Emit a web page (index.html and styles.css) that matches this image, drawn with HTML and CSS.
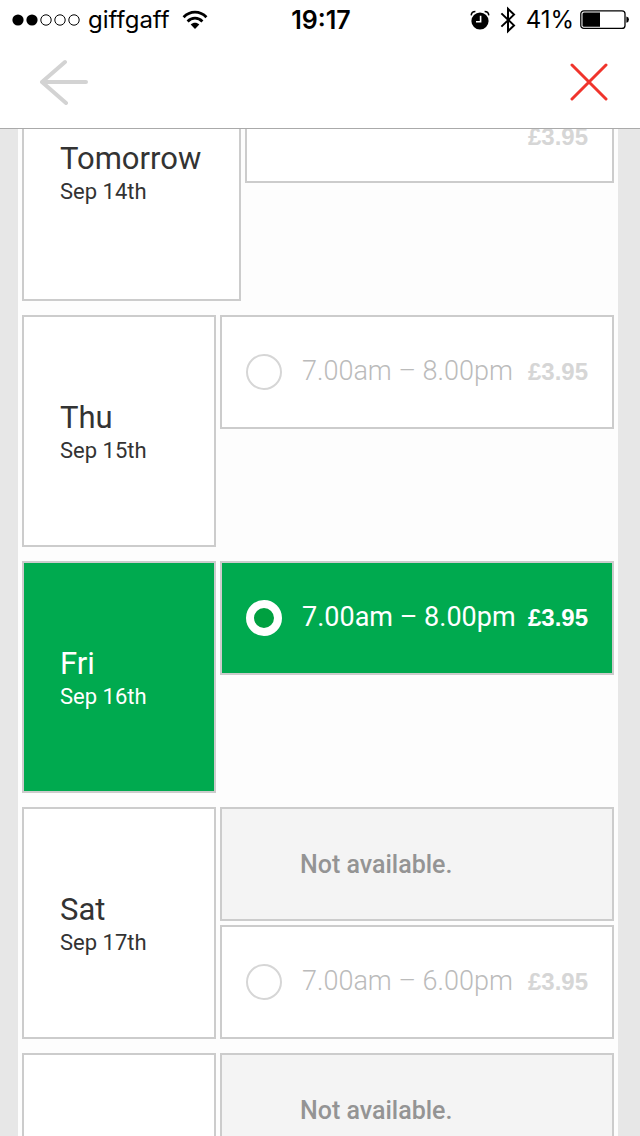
FILE: index.html
```html
<!DOCTYPE html>
<html lang="en">
<head>
<meta charset="utf-8">
<meta name="viewport" content="width=device-width, initial-scale=1">
<title>Delivery slot</title>
<link rel="stylesheet" href="styles.css">
</head>
<body>
<div class="status">
	<div class="status-left">
		<svg class="signal" width="68" height="12" viewBox="0 0 68 12">
			<circle cx="6" cy="6" r="5.6"/><circle cx="20" cy="6" r="5.6"/>
			<g fill="none" stroke="#000"><circle cx="34" cy="6" r="5.2"/><circle cx="48" cy="6" r="5.2"/><circle cx="62" cy="6" r="5.2"/></g>
		</svg>
		<span class="carrier">giffgaff</span>
		<svg width="26" height="20" viewBox="0 0 26 20">
			<g fill="none" stroke="#000" stroke-width="2.8"><path d="M1.6 7.2C8 .4 18 .4 24.4 7.2"/><path d="M5.6 11.4C9.8 7.1 16.2 7.1 20.4 11.4"/></g>
			<path d="M8.7 14.5C11.2 12.2 14.8 12.2 17.3 14.5L13 19Z"/>
		</svg>
	</div>
	<div class="clock">19:17</div>
	<div class="status-right">
		<svg width="20" height="20" viewBox="0 0 20 20">
			<circle cx="10" cy="11" r="8.6"/>
			<path d="M1.2 5.4C1.4 3.2 3.2 1.6 5.4 1.6M14.6 1.6C16.8 1.6 18.6 3.2 18.8 5.4" fill="none" stroke="#000" stroke-width="1.5"/>
			<path d="M10.6 5.8V11.7H6" fill="none" stroke="#fff" stroke-width="1.6"/>
		</svg>
		<svg width="16" height="28" viewBox="0 0 16 28">
			<path d="M1.4 7.4L14 19.4L8 25.2V2.8L14 8.6L1.4 20.6" fill="none" stroke="#000" stroke-width="2"/>
		</svg>
		<span>41%</span>
		<svg class="battery" width="50" height="20" viewBox="0 0 50 20">
			<rect x=".8" y=".8" width="44.2" height="17.6" rx="3" fill="none" stroke="#000" stroke-width="1.3"/>
			<path d="M2.5 4Q2.5 2.5 4 2.5H20V16.7H4Q2.5 16.7 2.5 15.2Z"/>
			<path d="M46.4 6.4Q49 7 49 9.6Q49 12.2 46.4 12.8Z"/>
		</svg>
	</div>
</div>
<header class="nav">
	<button class="nav-button" type="button" aria-label="Back">
		<svg width="48" height="46" viewBox="0 0 48 46" fill="none" stroke="#d3d3d3" stroke-width="4" stroke-linecap="round" stroke-linejoin="round"><path d="M25 3L2 23L26 44M2 23H46"/></svg>
	</button>
	<button class="nav-button" type="button" aria-label="Close">
		<svg width="38" height="38" viewBox="0 0 38 38" fill="none" stroke="#f0342c" stroke-width="3" stroke-linecap="round"><path d="M2 2L36 36M36 2L2 36"/></svg>
	</button>
</header>
<main class="scroller">
	<form class="days">
		<section class="day tall">
			<div class="date"><h2>Tomorrow</h2><p>Sep 14th</p></div>
			<div class="slots">
				<label class="slot"><input type="radio" name="slot"><b class="price">£3.95</b></label>
			</div>
		</section>
		<section class="day">
			<div class="date"><h2>Thu</h2><p>Sep 15th</p></div>
			<div class="slots">
				<label class="slot"><input type="radio" name="slot"><span class="time">7.00am – 8.00pm</span><b class="price">£3.95</b></label>
			</div>
		</section>
		<section class="day selected">
			<div class="date"><h2>Fri</h2><p>Sep 16th</p></div>
			<div class="slots">
				<label class="slot"><input type="radio" name="slot" checked><span class="time">7.00am – 8.00pm</span><b class="price">£3.95</b></label>
			</div>
		</section>
		<section class="day">
			<div class="date"><h2>Sat</h2><p>Sep 17th</p></div>
			<div class="slots">
				<div class="slot unavailable">Not available.</div>
				<label class="slot"><input type="radio" name="slot"><span class="time">7.00am – 6.00pm</span><b class="price">£3.95</b></label>
			</div>
		</section>
		<section class="day">
			<div class="date"></div>
			<div class="slots">
				<div class="slot unavailable">Not available.</div>
			</div>
		</section>
	</form>
</main>
</body>
</html>
```

FILE: styles.css
```css
* {
box-sizing:border-box;
}
body {
margin:0;
height:100vh;
display:flex;
flex-direction:column;
overflow:hidden;
background:#fff;
color:#333;
font-family:Roboto,"Liberation Sans",sans-serif;
}
h2, p {
margin:0;
font-weight:400;
}
.status {
display:grid;
grid-template-columns:1fr auto 1fr;
align-items:center;
height:40px;
padding:0 10px 0 12px;
color:#000;
font-family:Inter,"Liberation Sans",sans-serif;
font-size:24px;
line-height:40px;
}
.status-left, .status-right {
display:flex;
align-items:center;
}
.status-left {
gap:8px;
}
.carrier {
margin-right:4px;
}
.clock {
font-size:25px;
font-weight:600;
}
.status-right {
justify-content:flex-end;
gap:10px;
}
.battery {
margin-left:-4px;
}
.nav {
display:flex;
flex:none;
justify-content:space-between;
align-items:center;
height:89px;
padding:0 32px 4px 40px;
border-bottom:1px solid #aaa;
}
.nav-button {
display:flex;
padding:0;
border:0;
background:none;
}
.scroller {
flex:1;
overflow:hidden;
padding:0 22px 0 18px;
background:#e7e7e7;
}
/* the list is scrolled part way into the first day */
.days {
display:flex;
flex-direction:column;
gap:14px;
margin-top:-86px;
padding:0 4px;
background:#fdfdfd;
}
.day {
display:flex;
gap:4px;
}
.date {
display:flex;
flex-direction:column;
justify-content:center;
min-width:194px;
height:232px;
padding:4px 38px 0 36px;
border:2px solid #ccc;
background:#fff;
}
.date h2 {
font-size:31px;
line-height:36px;
}
.date p {
font-size:22px;
line-height:30px;
}
.slots {
display:flex;
flex:1;
flex-direction:column;
gap:4px;
}
.slot {
display:flex;
align-items:center;
height:114px;
padding:0 24px;
border:2px solid #ccc;
background:#fff;
color:#bbb;
}
.slot input {
appearance:none;
flex:none;
width:36px;
height:36px;
margin:0 20px 0 0;
border:2px solid #d6d6d6;
border-radius:50%;
background:#fff;
}
.time {
flex:1;
padding-bottom:2px;
font-size:27px;
font-weight:300;
white-space:nowrap;
}
.price {
color:#d6d6d6;
font-family:"Liberation Sans",Arial,sans-serif;
font-size:24px;
line-height:28px;
}
.tall .date {
height:258px;
}
.tall .slot {
flex-direction:column;
align-items:flex-start;
justify-content:center;
gap:12px;
height:140px;
}
.tall .price {
align-self:flex-end;
}
.unavailable {
padding-left:78px;
background:#f4f4f4;
color:#949494;
font-size:25px;
font-weight:500;
}
.selected .date, .selected .slot {
background:#00aa4f;
color:#fff;
}
.selected .slot input {
border:8px solid #fff;
background:#00a040;
}
.selected .time {
font-weight:400;
}
.selected .price {
color:#fff;
}
```
